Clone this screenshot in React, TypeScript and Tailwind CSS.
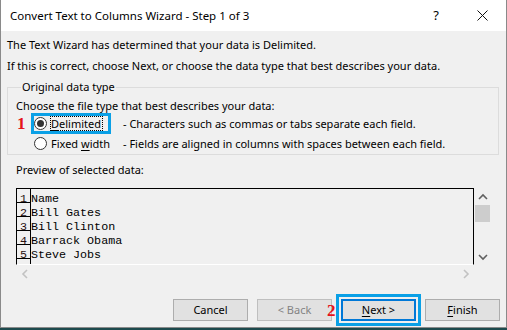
import React from "react";

const ui = { fontFamily: '"Noto Sans", "Liberation Sans", sans-serif' };
const mono = { fontFamily: '"Liberation Mono", "Courier New", monospace' };
const serif = { fontFamily: '"Liberation Serif", "Times New Roman", serif' };

function Radio({ checked }: { checked?: boolean }) {
  return (
    <span className="w-[13px] h-[13px] rounded-full border border-[#333] bg-white flex items-center justify-center shrink-0">
      {checked && <span className="w-[7px] h-[7px] rounded-full bg-[#333]" />}
    </span>
  );
}

function Chevron({ dir, color }: { dir: "up" | "down" | "left" | "right"; color: string }) {
  const d = {
    up: "M1 6 L5 2 L9 6",
    down: "M1 2 L5 6 L9 2",
    left: "M6 1 L2 5 L6 9",
    right: "M2 1 L6 5 L2 9",
  }[dir];
  const vert = dir === "up" || dir === "down";
  return (
    <svg width={vert ? 10 : 8} height={vert ? 8 : 10} viewBox={vert ? "0 0 10 8" : "0 0 8 10"}>
      <path d={d} fill="none" stroke={color} strokeWidth="1.6" />
    </svg>
  );
}

const rows = ["Name", "Bill Gates", "Bill Clinton", "Barrack Obama", "Steve Jobs", ""];

function Button({ children, disabled }: { children: React.ReactNode; disabled?: boolean }) {
  return (
    <div
      className={`w-[75px] h-[22px] flex items-center justify-center border ${
        disabled ? "bg-[#e1e1e1] border-[#bfbfbf] text-[#838383]" : "bg-[#e1e1e1] border-[#adadad] text-black"
      }`}
    >
      {children}
    </div>
  );
}

export default function App() {
  return (
    <div className="w-[507px] h-[330px] bg-[#1d4a4d] overflow-hidden" style={ui}>
      <div className="w-[507px] h-[328px] bg-[#f0f0f0] border-x border-b border-[#8a8a8a] flex flex-col text-[11px] text-black">
        {/* title bar */}
        <div className="h-[31px] bg-white flex items-center shrink-0">
          <span className="pl-[9px] leading-[16px] text-[11.5px]">Convert Text to Columns Wizard - Step 1 of 3</span>
          <span className="ml-auto w-[12px] text-center text-[13px] mr-[35px]">?</span>
          <svg width="11" height="11" viewBox="0 0 11 11" className="mr-[18px]">
            <path d="M0.5 0.5 L10.5 10.5 M10.5 0.5 L0.5 10.5" stroke="#111" strokeWidth="1" />
          </svg>
        </div>

        <div className="pl-[6px] mt-[6px] leading-[16px]">The Text Wizard has determined that your data is Delimited.</div>
        <div className="pl-[6px] mt-[5px] leading-[16px]">
          If this is correct, choose Next, or choose the data type that best describes your data.
        </div>

        <fieldset className="ml-[6px] mr-[7px] mt-[5px] border border-[#dcdcdc] pl-[8px] pb-[1px]">
          <legend className="ml-[5px] px-[1px] leading-[16px]">Original data type</legend>
          <div className="mt-[4px] leading-[14px]">Choose the file type that best describes your data:</div>

          <div className="flex items-center h-[21px]">
            <div className="w-[107px] flex items-center">
              <span className="w-[15px] pl-[1px] text-[17px] font-bold text-[#e5141b] leading-[16px]" style={serif}>
                1
              </span>
              <div className="h-[21px] w-[80px] border-[3px] border-[#0aa0e6] flex items-center">
                <Radio checked />
                <span className="ml-[3px] border border-dotted border-black leading-[13px] pr-[1px]">
                  <u className="underline-offset-2">D</u>elimited
                </span>
              </div>
            </div>
            <span className="leading-[16px]">- Characters such as commas or tabs separate each field.</span>
          </div>

          <div className="flex items-center h-[19px]">
            <div className="w-[107px] flex items-center pl-[18px]">
              <Radio />
              <span className="ml-[4px] leading-[16px]">
                Fixed <u className="underline-offset-2">w</u>idth
              </span>
            </div>
            <span className="leading-[16px]">- Fields are aligned in columns with spaces between each field.</span>
          </div>
        </fieldset>

        <div className="pl-[15px] mt-[7px] leading-[16px]">Preview of selected data:</div>

        {/* preview */}
        <div className="ml-[15px] mt-[10px] w-[475px] flex flex-col">
          <div className="flex">
            <div
              className="w-[458px] h-[77px] border-t border-x border-black border-b border-b-white overflow-hidden text-[11.7px]"
              style={mono}
            >
              {rows.map((r, i) => (
                <div key={i} className="flex h-[14px] leading-[21px]">
                  <span className="w-[14px] h-[14px] border-r border-b border-black text-center text-[#2a1010] overflow-visible">
                    {r ? i + 1 : ""}
                  </span>
                  <span className="whitespace-pre">{r}</span>
                </div>
              ))}
            </div>
            <div className="w-[17px] h-[77px] flex flex-col">
              <div className="h-[17px] flex items-center justify-center">
                <Chevron dir="up" color="#606060" />
              </div>
              <div className="h-[17px] mx-[1px] bg-[#cdcdcd]" />
              <div className="flex-1" />
              <div className="h-[17px] flex items-center justify-center">
                <Chevron dir="down" color="#606060" />
              </div>
            </div>
          </div>
          <div className="w-[458px] h-[17px] flex items-center justify-between">
            <div className="w-[17px] flex justify-center">
              <Chevron dir="left" color="#c2c2c2" />
            </div>
            <div className="w-[17px] flex justify-center">
              <Chevron dir="right" color="#c2c2c2" />
            </div>
          </div>
        </div>

        {/* buttons */}
        <div className="mt-[12px] flex items-center pl-[172px] relative">
          <Button>Cancel</Button>
          <div className="ml-[9px]">
            <Button disabled>&lt; Back</Button>
          </div>
          <span
            className="absolute left-[326px] top-[9px] text-[17px] font-bold text-[#e5141b] leading-[16px]"
            style={serif}
          >
            2
          </span>
          <div className="ml-[4px] border-[3px] border-[#0aa0e6] p-[2px]">
            <div className="w-[75px] h-[22px] flex items-center justify-center bg-[#e1e1e1] border-2 border-[#0078d7]">
              <span>
                <u className="underline-offset-2">N</u>ext &gt;
              </span>
            </div>
          </div>
          <div className="ml-[4px]">
            <Button>
              <span>
                <u className="underline-offset-2">F</u>inish
              </span>
            </Button>
          </div>
        </div>
      </div>
    </div>
  );
}
